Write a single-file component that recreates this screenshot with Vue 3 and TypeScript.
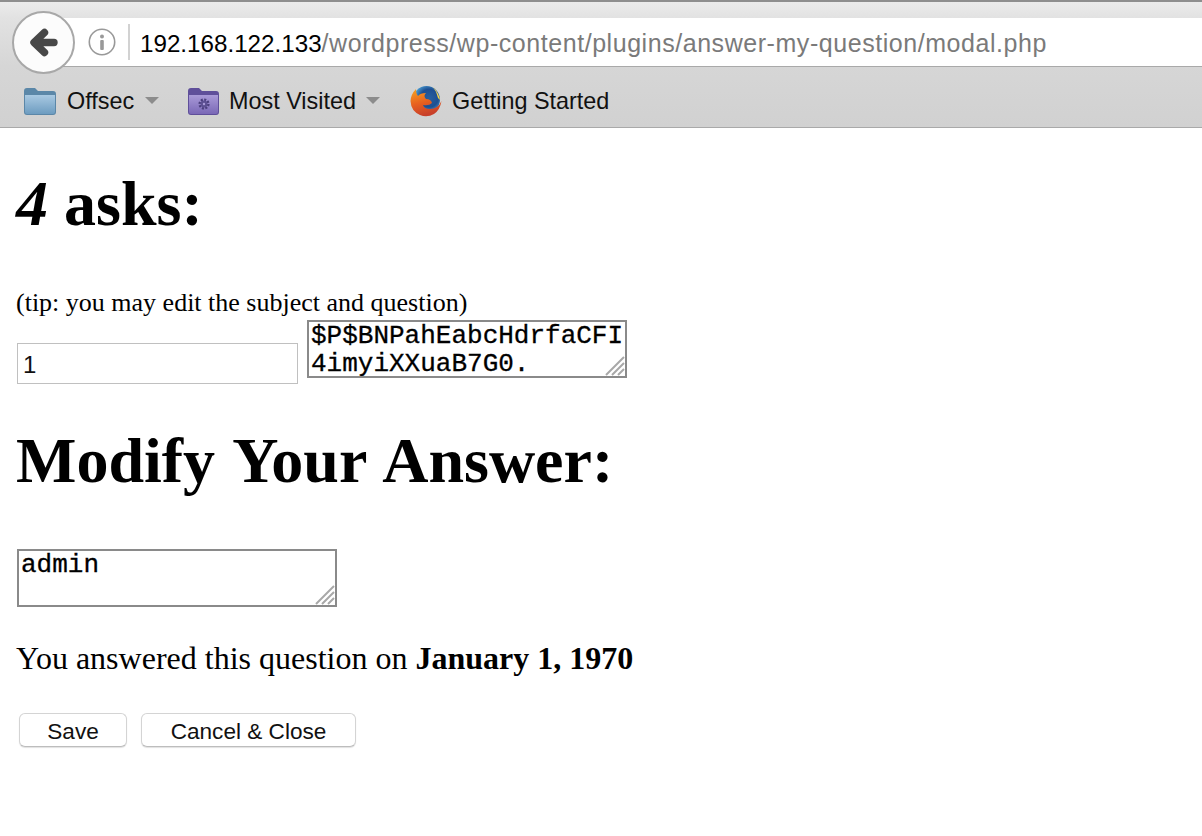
<script setup lang="ts">
import { ref } from "vue";

const subject = ref("1");
const question = ref("$P$BNPahEabcHdrfaCFI4imyiXXuaB7G0.");
const answer = ref("admin");
</script>

<template>
  <div class="page">
    <header class="browser">
      <div class="nav-row">
        <button class="back" aria-label="Back">
          <svg width="32" height="32" viewBox="0 0 32 32">
            <path d="M16.5 5.5 L6 15.5 L16.5 25.5 M7 15.5 H26" fill="none" stroke="#484848" stroke-width="7.4" stroke-linecap="round" stroke-linejoin="round" />
          </svg>
        </button>
        <div class="urlbar">
          <svg class="info" width="28" height="28" viewBox="0 0 28 28">
            <circle cx="14" cy="14" r="12.7" fill="none" stroke="#999" stroke-width="1.6" />
            <circle cx="14" cy="8.4" r="2" fill="#999" />
            <rect x="12.2" y="12" width="3.6" height="10" rx="1" fill="#999" />
          </svg>
          <span class="divider"></span>
          <span class="url"><span class="host">192.168.122.133</span><span class="path">/wordpress/wp-content/plugins/answer-my-question/modal.php</span></span>
        </div>
      </div>
      <nav class="bookmarks">
        <a class="bookmark offsec">
          <svg width="34" height="30" viewBox="0 0 34 30">
            <defs>
              <linearGradient id="blueFolder" x1="0" y1="0" x2="0" y2="1">
                <stop offset="0" stop-color="#a9c9e2" />
                <stop offset="1" stop-color="#6d9cc0" />
              </linearGradient>
            </defs>
            <path d="M1 5 Q1 2 4 2 H12 L15 5 H30 Q33 5 33 8 V26 Q33 29 30 29 H4 Q1 29 1 26 Z" fill="#5b87a8" />
            <path d="M2 9 H32 V26 Q32 28 30 28 H4 Q2 28 2 26 Z" fill="url(#blueFolder)" />
          </svg>
          <span class="label">Offsec</span>
          <i class="caret"></i>
        </a>
        <a class="bookmark visited">
          <svg width="33" height="30" viewBox="0 0 33 30">
            <defs>
              <linearGradient id="purpleFolder" x1="0" y1="0" x2="0" y2="1">
                <stop offset="0" stop-color="#a99ad8" />
                <stop offset="1" stop-color="#7a68b6" />
              </linearGradient>
            </defs>
            <path d="M1 5 Q1 2 4 2 H12 L15 5 H29 Q32 5 32 8 V26 Q32 29 29 29 H4 Q1 29 1 26 Z" fill="#5f4f9a" />
            <path d="M2 9 H31 V26 Q31 28 29 28 H4 Q2 28 2 26 Z" fill="url(#purpleFolder)" />
            <circle cx="17" cy="18" r="4.4" fill="none" stroke="#4b3f7d" stroke-width="2.4" stroke-dasharray="2 1.4" />
            <circle cx="17" cy="18" r="3.4" fill="#5c4f92" />
            <circle cx="17" cy="18" r="1.2" fill="#a99ad8" />
          </svg>
          <span class="label">Most Visited</span>
          <i class="caret"></i>
        </a>
        <a class="bookmark started">
          <svg width="34" height="34" viewBox="0 0 34 34">
            <defs>
              <radialGradient id="fxGlobe" cx="0.6" cy="0.45" r="0.6">
                <stop offset="0" stop-color="#27609f" />
                <stop offset="0.55" stop-color="#1d4f92" />
                <stop offset="1" stop-color="#55aee0" />
              </radialGradient>
              <linearGradient id="fxFox" x1="0" y1="0" x2="0.3" y2="1">
                <stop offset="0" stop-color="#f5a623" />
                <stop offset="0.55" stop-color="#e8611f" />
                <stop offset="1" stop-color="#c8402a" />
              </linearGradient>
            </defs>
            <circle cx="17.5" cy="15.5" r="13.5" fill="url(#fxGlobe)" />
            <path d="M24 3 Q30 9 31 16 L29 14 Q28 8 24 3Z" fill="#f3d34a" />
            <path d="M7 5 Q2 10 1.5 17 Q2 27 11 31 Q18 34 25 30 Q31 26 32.5 17 Q29 25 21 25 Q15 25 14 21 Q20 22 23 19 Q22 15 17 15 Q14 12 17 9 Q11 9 9 12 Q7 10 7 5Z" fill="url(#fxFox)" />
          </svg>
          <span class="label">Getting Started</span>
        </a>
      </nav>
    </header>

    <main class="content">
      <h1><em>4</em> asks:</h1>
      <p class="tip">(tip: you may edit the subject and question)</p>
      <div class="question-row">
        <input v-model="subject" class="subject" type="text" />
        <div class="area question">
          <textarea v-model="question" spellcheck="false"></textarea>
          <svg class="grip" width="21" height="21" viewBox="0 0 21 21">
            <path d="M20 2 L2 20 M20 8 L8 20 M20 14 L14 20" stroke="#a8a8a8" stroke-width="2" fill="none" />
          </svg>
        </div>
      </div>
      <h1 class="modify">Modify Your Answer:</h1>
      <div class="area answer">
        <textarea v-model="answer" spellcheck="false"></textarea>
        <svg class="grip" width="21" height="21" viewBox="0 0 21 21">
          <path d="M20 2 L2 20 M20 8 L8 20 M20 14 L14 20" stroke="#a8a8a8" stroke-width="2" fill="none" />
        </svg>
      </div>
      <p class="answered">You answered this question on <strong>January 1, 1970</strong></p>
      <div class="actions">
        <button class="btn save">Save</button>
        <button class="btn cancel">Cancel &amp; Close</button>
      </div>
    </main>
  </div>
</template>

<style>
html,
body {
  margin: 0;
  background: #fff;
}
</style>

<style scoped>
.page {
  width: 1202px;
  height: 836px;
  overflow: hidden;
  font-family: "Liberation Serif", serif;
  color: #000;
}

.browser {
  height: 125px;
  border-top: 2px solid #8e8e8e;
  border-bottom: 1px solid #a9a9a9;
  background: linear-gradient(#ebebeb, #e2e2e2 16px, #d6d6d6 64px, #d1d1d1);
  font-family: "Liberation Sans", sans-serif;
}

.nav-row {
  height: 64px;
  display: flex;
  align-items: flex-start;
  position: relative;
}

.back {
  position: absolute;
  left: 12px;
  top: 9px;
  z-index: 1;
  width: 63px;
  height: 63px;
  padding: 0;
  box-sizing: border-box;
  border: 2px solid #a8a8a8;
  border-radius: 50%;
  background: #fcfcfc;
  display: flex;
  align-items: center;
  justify-content: center;
}

.urlbar {
  flex: 1;
  height: 48px;
  margin: 16px 0 0 60px;
  box-sizing: content-box;
  border-bottom: 1px solid #a9a9a9;
  background: #fff;
  display: flex;
  align-items: center;
  padding-left: 28px;
}

.divider {
  width: 2px;
  height: 36px;
  margin: 0 10px 0 12px;
  background: #d2d2d2;
}

.url {
  margin-top: 2px;
  white-space: nowrap;
}

.host {
  font-size: 24.2px;
  color: #000;
}

.path {
  font-size: 25px;
  letter-spacing: 0.55px;
  color: #7a7a7a;
}

.bookmarks {
  display: flex;
  align-items: center;
  height: 60px;
  box-sizing: border-box;
  padding: 9px 0 0 23px;
  font-size: 23.4px;
}

.bookmark {
  display: flex;
  align-items: center;
  gap: 10px;
  color: #111;
}

.label {
  padding-top: 2px;
}

.offsec {
  width: 164px;
}

.visited {
  width: 222px;
  gap: 9px;
}

.started {
  gap: 9px;
}

.caret {
  width: 0;
  height: 0;
  margin-left: 1px;
  border-left: 7px solid transparent;
  border-right: 7px solid transparent;
  border-top: 7px solid #8c8c8c;
}

.content {
  padding: 0 16px;
}

h1 {
  margin: 0;
  font-size: 64px;
  line-height: 74px;
  font-weight: bold;
}

.content > h1:first-child {
  margin-top: 39px;
}

.tip {
  margin: 47px 0 0;
  font-size: 26px;
  line-height: 30px;
}

.question-row {
  display: flex;
  gap: 9px;
  align-items: flex-start;
  margin: 2px 0 0 1px;
}

.subject {
  width: 281px;
  height: 41px;
  box-sizing: border-box;
  margin-top: 23px;
  padding: 2px 5px 0;
  border: 1px solid #c0c0c0;
  border-radius: 0;
  outline: none;
  font-family: "Liberation Sans", sans-serif;
  font-size: 24px;
  color: #111;
}

.area {
  position: relative;
}

.area textarea {
  display: block;
  width: 100%;
  height: 100%;
  box-sizing: border-box;
  padding: 0 0 0 2px;
  border: 2px solid #8a8a8a;
  border-radius: 0;
  outline: none;
  resize: none;
  overflow: hidden;
  font-family: "Liberation Mono", monospace;
  font-size: 26px;
  line-height: 28px;
  color: #000;
  -webkit-text-stroke: 0.3px #000;
}

.question {
  width: 320px;
  height: 58px;
}

.answer {
  width: 320px;
  height: 58px;
  margin: 51px 0 0 1px;
}

.grip {
  position: absolute;
  right: 2px;
  bottom: 2px;
}

.modify {
  margin-top: 40px;
  word-spacing: 3.5px;
}

.answered {
  margin: 33px 0 0;
  font-size: 32px;
  line-height: 37px;
}

.actions {
  display: flex;
  gap: 14px;
  margin: 36px 0 0 3px;
}

.btn {
  height: 34px;
  padding: 4px 0 0;
  box-sizing: border-box;
  border: 1px solid #d4d4d4;
  border-bottom-color: #bdbdbd;
  border-radius: 6px;
  background: #fff;
  box-shadow: 0 1px 1px rgba(0, 0, 0, 0.12);
  font-family: "Liberation Sans", sans-serif;
  font-size: 22.6px;
  color: #111;
}

.save {
  width: 108px;
}

.cancel {
  width: 215px;
}
</style>
